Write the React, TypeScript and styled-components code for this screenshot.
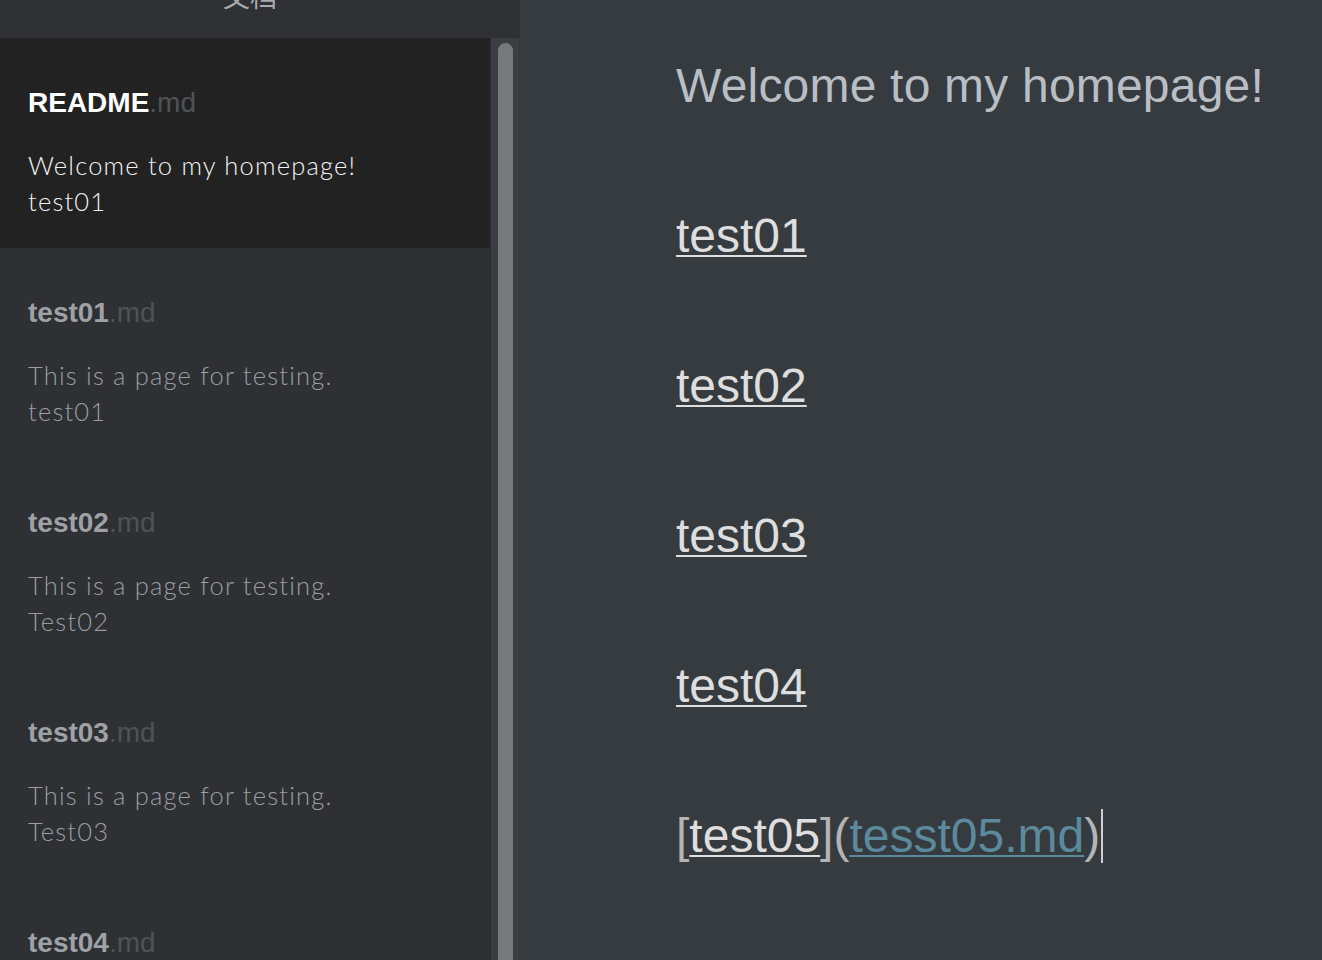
import styled, { createGlobalStyle } from "styled-components";

const GlobalStyle = createGlobalStyle`
    html, body {
        margin: 0;
        padding: 0;
        background: #363b40;
        overflow: hidden;
    }
`

type Doc = { name: string; lines: string[] };

const docs: Doc[] = [
    { name: 'README', lines: ['Welcome to my homepage!', 'test01'] },
    { name: 'test01', lines: ['This is a page for testing.', 'test01'] },
    { name: 'test02', lines: ['This is a page for testing.', 'Test02'] },
    { name: 'test03', lines: ['This is a page for testing.', 'Test03'] },
    { name: 'test04', lines: ['This is a page for testing.', 'Test04'] },
];

const links = ['test01', 'test02', 'test03', 'test04'];

export default function App() {
    return (
        <Page>
            <GlobalStyle/>
            <Sidebar>
                <Header>
                    <HeaderTitle>文档</HeaderTitle>
                </Header>
                <SidebarBody>
                    <FileList>
                        {docs.map((d, i) => (
                            <FileItem key={d.name} active={i === 0}>
                                <FileTitle active={i === 0}>
                                    {d.name}<Ext>.md</Ext>
                                </FileTitle>
                                <Excerpt active={i === 0}>
                                    {d.lines.map(l => <div key={l}>{l}</div>)}
                                </Excerpt>
                            </FileItem>
                        ))}
                    </FileList>
                    <Track>
                        <Thumb/>
                    </Track>
                </SidebarBody>
            </Sidebar>
            <Editor>
                <Heading>Welcome to my homepage!</Heading>
                {links.map(l => (
                    <Para key={l}><Link>{l}</Link></Para>
                ))}
                <Para>
                    <Mark>[</Mark><Link>test05</Link><Mark>]</Mark>
                    <Mark>(</Mark><Url>tesst05.md</Url><Mark>)</Mark>
                    <Caret/>
                </Para>
            </Editor>
        </Page>
    );
}

const Page = styled.div`
    display: flex;
    height: 100vh;
    width: 100vw;
`

const Sidebar = styled.div`
    background-color: #2e3034;
    display: flex;
    flex-direction: column;
    flex: 0 0 520px;
    height: 100%;
`

const Header = styled.div`
    flex: 0 0 38px;
    display: flex;
    justify-content: center;
    overflow: hidden;
    background-color: #2f3135;
`

const HeaderTitle = styled.div`
    color: #a8abb0;
    font-family: "Noto Sans CJK SC", sans-serif;
    font-size: 27px;
    line-height: 30px;
    margin-top: -19px;
    margin-left: -20px;
`

const SidebarBody = styled.div`
    display: flex;
    flex: 1;
    min-height: 0;
`

const FileList = styled.div`
    flex: 1;
    overflow: hidden;
`

const FileItem = styled.div<{active: boolean}>`
    background-color: ${p => p.active ? '#222222' : 'transparent'};
    box-sizing: border-box;
    height: 210px;
    padding: 47px 28px 0;
`

const FileTitle = styled.div<{active: boolean}>`
    color: ${p => p.active ? '#ffffff' : '#9ea1a5'};
    font-family: "Liberation Sans", Arial, sans-serif;
    font-size: 28px;
    font-weight: bold;
    line-height: 36px;
`

const Ext = styled.span`
    color: #4f5256;
    font-weight: normal;
`

const Excerpt = styled.div<{active: boolean}>`
    color: ${p => p.active ? '#f2f2f2' : '#9a9ea3'};
    font-family: Lato, "Open Sans", sans-serif;
    font-size: 25.5px;
    font-weight: 300;
    letter-spacing: 1.2px;
    line-height: 36px;
    margin-top: 26px;
`

const Track = styled.div`
    flex: 0 0 30px;
    box-sizing: border-box;
    background-color: #3a3d42;
    border-left: 1px solid #2b2d30;
    border-right: 1px solid #33373b;
    padding: 5px 6px 0 7px;
    display: flex;
`

const Thumb = styled.div`
    flex: 1;
    background-color: #77787a;
    border-radius: 8px 8px 0 0;
`

const Editor = styled.div`
    flex: 1;
    background-color: #363b40;
    padding: 56px 0 0 156px;
    display: flex;
    flex-direction: column;
    gap: 90px;
    font-family: "Liberation Sans", Arial, sans-serif;
    font-size: 48px;
    line-height: 60px;
`

const Heading = styled.div`
    color: #b9bec5;
    letter-spacing: 0.2px;
`

const Para = styled.div`
    color: #dcdcdc;
    display: flex;
    align-items: center;
`

const Link = styled.span`
    color: #dedede;
    text-decoration: underline;
    text-decoration-thickness: 2px;
    text-underline-offset: 3px;
`

const Mark = styled.span`
    color: #b4b4b4;
`

const Url = styled.span`
    color: #5b8a9c;
    text-decoration: underline;
    text-decoration-thickness: 2px;
    text-underline-offset: 3px;
`

const Caret = styled.span`
    display: inline-block;
    width: 2px;
    height: 54px;
    margin-left: 1px;
    background-color: #cfcfcf;
`
